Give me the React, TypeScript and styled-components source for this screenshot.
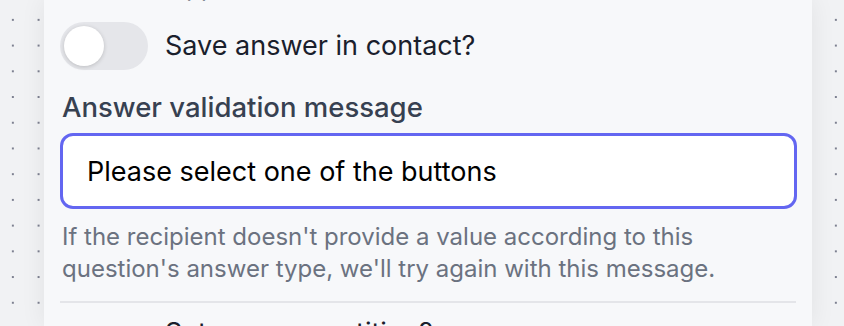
import * as React from 'react';
import styled, { createGlobalStyle } from 'styled-components';

const GlobalStyle = createGlobalStyle`
  html, body {
    margin: 0;
    padding: 0;
  }
  body {
    width: 844px;
    height: 326px;
    overflow: hidden;
    font-family: Inter, "Noto Sans", "Liberation Sans", sans-serif;
    background-color: #f1f2f4;
    background-image: radial-gradient(circle, #7d8090 0.9px, transparent 1.3px);
    background-size: 25.72px 25.72px;
    background-position: 0px 7px;
  }
`;

const Canvas = styled.div`
  display: flex;
  height: 326px;
  padding-left: 44px;
  box-sizing: border-box;
`;

const Panel = styled.section`
  width: 768px;
  height: 326px;
  background: #f7f8fa;
  box-shadow: 0 0 24px rgba(0, 0, 0, 0.07);
  overflow: hidden;
  padding: 0 15px 0 16px;
  box-sizing: border-box;
`;

const Stack = styled.div`
  display: flex;
  flex-direction: column;
  margin-top: -28px;
`;

const ClippedHint = styled.p`
  margin: 0 0 0 2px;
  font-size: 24px;
  line-height: 32px;
  color: #6b7280;
`;

const ToggleRow = styled.label`
  display: flex;
  align-items: center;
  gap: 17px;
  min-height: 48px;
`;

const TopToggle = styled(ToggleRow)`
  margin-top: 18px;
`;

const BottomToggle = styled(ToggleRow)`
  margin-top: 12px;
`;

const Track = styled.span<{ $on?: boolean }>`
  position: relative;
  flex: none;
  width: 88px;
  height: 48px;
  border-radius: 24px;
  background: ${(p) => (p.$on ? '#6366f1' : '#e5e6ea')};
`;

const Knob = styled.span<{ $on?: boolean }>`
  position: absolute;
  top: 4px;
  left: ${(p) => (p.$on ? '43px' : '4px')};
  width: 40px;
  height: 40px;
  border-radius: 50%;
  background: #ffffff;
  box-shadow: 0 1px 4px rgba(0, 0, 0, 0.18);
`;

const ToggleText = styled.span`
  font-size: 27px;
  line-height: 36px;
  color: #1a202c;
`;

const FieldLabel = styled.div`
  margin: 19px 0 0 2px;
  font-size: 27.5px;
  line-height: 36px;
  font-weight: 500;
  color: #374151;
`;

const Input = styled.input`
  margin-top: 8px;
  height: 76px;
  box-sizing: border-box;
  border: 3px solid #6366f1;
  border-radius: 13px;
  background: #ffffff;
  padding: 0 24px;
  font-family: inherit;
  font-size: 27px;
  color: #000000;
  outline: none;
`;

const Hint = styled.p`
  margin: 12px 0 0 2px;
  font-size: 24px;
  line-height: 32px;
  color: #6b7280;
`;

const Divider = styled.hr`
  margin: 16px 1px 0 0;
  border: none;
  border-top: 2px solid #e4e5e9;
`;

const App: React.FC = () => (
  <>
    <GlobalStyle />
    <Canvas>
      <Panel>
        <Stack>
          <ClippedHint>Shown in app.</ClippedHint>
          <TopToggle>
            <Track>
              <Knob />
            </Track>
            <ToggleText>Save answer in contact?</ToggleText>
          </TopToggle>
          <FieldLabel>Answer validation message</FieldLabel>
          <Input readOnly value="Please select one of the buttons" />
          <Hint>
            If the recipient doesn't provide a value according to this
            <br />
            question's answer type, we'll try again with this message.
          </Hint>
          <Divider />
          <BottomToggle>
            <Track>
              <Knob />
            </Track>
            <ToggleText>
              Set a max repetition?
              <br />
              Stop asking after a number of tries
              <br />
              and continue the flow.
            </ToggleText>
          </BottomToggle>
        </Stack>
      </Panel>
    </Canvas>
  </>
);

export default App;
